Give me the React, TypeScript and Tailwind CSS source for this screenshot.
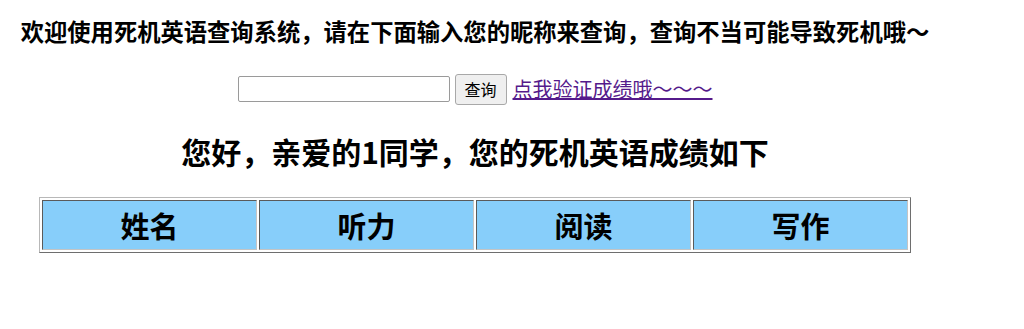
const cols = ['姓名', '听力', '阅读', '写作']

const App = () => {
  return (
    <div className="w-[950px] bg-white pt-[15px] text-black [font-family:'Noto_Sans_CJK_SC','Noto_Sans',sans-serif]">
      <h3 className="text-center text-[23.3px] font-bold leading-[32px]">
        欢迎使用死机英语查询系统，请在下面输入您的昵称来查询，查询不当可能导致死机哦～
      </h3>

      <form className="mt-[26px] flex h-[32px] items-center justify-center">
        <input
          className="h-[26px] w-[212px] rounded-[2px] border border-[#9a9a9a] bg-white px-1 outline-none"
          type="text"
        />
        <button
          type="button"
          className="ml-[5px] h-[31px] w-[52px] rounded-[3px] border border-[#a8a8a8] bg-[#efefef] text-[16px] leading-none text-black"
        >
          查询
        </button>
        <a href="#" className="ml-[6px] text-[20px] leading-[28px] text-[#551a8b] underline">
          点我验证成绩哦～～～
        </a>
      </form>

      <h2 className="mt-[26px] text-center text-[30px] font-bold leading-[40px]">
        您好，亲爱的1同学，您的死机英语成绩如下
      </h2>

      <div className="mt-[26px] flex justify-center">
        <table className="w-[872px] border-separate border-spacing-[2px] border border-t-[#b8b8b8] border-l-[#b8b8b8] border-b-[#6e6e6e] border-r-[#6e6e6e]">
          <thead>
            <tr>
              {cols.map(c => (
                <th
                  key={c}
                  className="h-[50px] w-1/4 border border-t-[#5a5a5a] border-l-[#5a5a5a] border-b-[#c4c4c4] border-r-[#c4c4c4] bg-[#87cefa] text-center text-[29px] font-bold leading-none"
                >
                  {c}
                </th>
              ))}
            </tr>
          </thead>
        </table>
      </div>
    </div>
  )
}

export default App
